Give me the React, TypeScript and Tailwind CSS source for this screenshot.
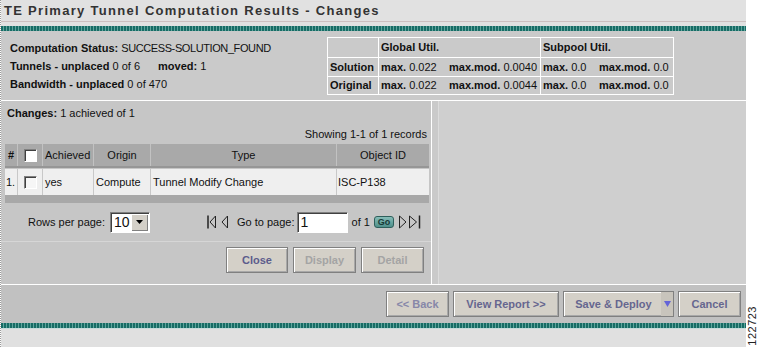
import React from "react";

const btnBase =
  "h-[26px] flex items-center justify-center bg-[#d4d0c8] border border-[#808080] shadow-[inset_1px_1px_0_#ffffff,inset_-1px_-1px_0_#a8a8a8] font-bold text-[11px]";

const Checkbox = ({ bg = "bg-white" }: { bg?: string }) => (
  <div className={`w-[13px] h-[13px] ${bg} border-t border-l border-[#808080] border-b border-r border-b-white border-r-white shadow-[inset_1px_1px_0_#404040]`} />
);

const Teal = () => (
  <div className="h-[5px] bg-[repeating-linear-gradient(90deg,#176c65_0px,#176c65_2px,#5fa39c_2px,#5fa39c_3px)]" />
);

// pager arrows
const First = () => (
  <svg width="9" height="14" viewBox="0 0 9 14">
    <line x1="1" y1="0.5" x2="1" y2="13.5" stroke="#222" strokeWidth="1.5" />
    <polygon points="8.5,1 3,7 8.5,13" fill="none" stroke="#222" strokeWidth="1" />
  </svg>
);
const Prev = () => (
  <svg width="7" height="14" viewBox="0 0 7 14">
    <polygon points="6.5,1 1,7 6.5,13" fill="none" stroke="#222" strokeWidth="1" />
  </svg>
);
const Next = () => (
  <svg width="8" height="14" viewBox="0 0 8 14">
    <polygon points="0.5,1 7,7 0.5,13" fill="none" stroke="#222" strokeWidth="1" />
  </svg>
);
const Last = () => (
  <svg width="12" height="14" viewBox="0 0 12 14">
    <polygon points="0.5,1 7.5,7 0.5,13" fill="none" stroke="#222" strokeWidth="1" />
    <line x1="10.5" y1="0.5" x2="10.5" y2="13.5" stroke="#222" strokeWidth="1.5" />
  </svg>
);

export default function App() {
  return (
    <div className="w-[762px] h-[347px] flex bg-white overflow-hidden font-['Liberation_Sans',Arial,sans-serif] text-[11px] text-[#111]">
      <div className="w-[746px] flex flex-col border-l border-dotted border-[#9a9a9a]">
        {/* title */}
        <div className="h-[21px] bg-[#e1e1e1] pl-[3px] pt-[3px] text-[13px] leading-[15px] font-bold tracking-[1.3px] text-[#333]">
          TE Primary Tunnel Computation Results - Changes
        </div>
        <div className="h-px bg-[#cbbfbf]" />
        <div className="h-[4px] bg-[#e1e1e1]" />
        <Teal />

        {/* status */}
        <div className="h-[69px] bg-[#cacaca] flex">
          <div className="w-[326px] pl-[9px] pt-[8px] leading-[18px]">
            <div>
              <b>Computation Status:</b> <span className="tracking-[-0.4px]">SUCCESS-SOLUTION_FOUND</span>
            </div>
            <div>
              <b>Tunnels - unplaced</b> 0 of 6 <b className="ml-[15px]">moved:</b> 1
            </div>
            <div>
              <b>Bandwidth - unplaced</b> 0 of 470
            </div>
          </div>
          <table className="mt-[6px] self-start border-collapse border border-white">
            <tbody>
              <tr className="h-[20px]">
                <td className="w-[51px] border border-white" />
                <td className="w-[162px] border border-white px-[2px] font-bold">Global Util.</td>
                <td className="w-[133px] border border-white px-[2px] font-bold">Subpool Util.</td>
              </tr>
              <tr className="h-[19px]">
                <td className="border border-white px-[2px] font-bold">Solution</td>
                <td className="border border-white px-[2px] whitespace-nowrap">
                  <span className="inline-block w-[68px]"><b>max.</b> 0.022</span>
                  <b>max.mod.</b> 0.0040
                </td>
                <td className="border border-white px-[2px] whitespace-nowrap">
                  <span className="inline-block w-[56px]"><b>max.</b> 0.0</span>
                  <b>max.mod.</b> 0.0
                </td>
              </tr>
              <tr className="h-[18px]">
                <td className="border border-white px-[2px] font-bold">Original</td>
                <td className="border border-white px-[2px] whitespace-nowrap">
                  <span className="inline-block w-[68px]"><b>max.</b> 0.022</span>
                  <b>max.mod.</b> 0.0044
                </td>
                <td className="border border-white px-[2px] whitespace-nowrap">
                  <span className="inline-block w-[56px]"><b>max.</b> 0.0</span>
                  <b>max.mod.</b> 0.0
                </td>
              </tr>
            </tbody>
          </table>
        </div>
        <div className="h-px bg-white" />

        {/* changes */}
        <div className="h-[183px] flex">
          <div className="w-[430px] bg-[#c6c6c6] flex flex-col">
            <div className="h-[24px] flex items-center pl-[6px]">
              <span>
                <b>Changes:</b> 1 achieved of 1
              </span>
            </div>
            <div className="h-[19px] flex items-center justify-end pr-[4px]">Showing 1-1 of 1 records</div>

            <div className="ml-[4px] w-[424px]">
              <div className="h-[24px] flex bg-[#a9a9a9] border-b-2 border-[#969696] text-[#111]">
                <div className="w-[13px] flex items-center justify-center border-r border-[#c2c2c2] font-bold">#</div>
                <div className="w-[25px] flex items-center justify-center border-r border-[#c2c2c2]">
                  <Checkbox />
                </div>
                <div className="w-[51px] flex items-center pl-[2px] border-r border-[#c2c2c2]">Achieved</div>
                <div className="w-[57px] flex items-center justify-center border-r border-[#c2c2c2]">Origin</div>
                <div className="w-[186px] flex items-center justify-center border-r border-[#c2c2c2]">Type</div>
                <div className="flex-1 flex items-center justify-center">Object ID</div>
              </div>
              <div className="h-[26px] mt-[1px] flex bg-[#efefef]">
                <div className="w-[13px] flex items-center pl-[1px] border-r border-[#c8c8c8]">1.</div>
                <div className="w-[25px] flex items-center justify-center border-r border-[#c8c8c8]">
                  <Checkbox bg="bg-[#f6f6f6]" />
                </div>
                <div className="w-[51px] flex items-center pl-[2px] border-r border-[#c8c8c8]">yes</div>
                <div className="w-[57px] flex items-center pl-[2px] border-r border-[#c8c8c8]">Compute</div>
                <div className="w-[186px] flex items-center pl-[2px] border-r border-[#c8c8c8]">Tunnel Modify Change</div>
                <div className="flex-1 flex items-center pl-[1px]">ISC-P138</div>
              </div>
              <div className="h-[8px] bg-[#a8a8a8]" />
            </div>

            {/* pager */}
            <div className="h-[38px] flex items-center">
              <span className="ml-[27px] text-[#111]">Rows per page:</span>
              <div className="ml-[5px] w-[40px] h-[21px] flex items-center bg-white border-t border-l border-[#808080] border-b border-r border-b-white border-r-white shadow-[inset_1px_1px_0_#404040]">
                <span className="pl-[3px] text-[14px] leading-none flex-1">10</span>
                <div className="w-[17px] h-[17px] mr-[1px] flex items-center justify-center bg-[#d4d0c8] shadow-[inset_1px_1px_0_#ffffff,inset_-1px_-1px_0_#808080]">
                  <svg width="7" height="4" viewBox="0 0 7 4">
                    <polygon points="0,0 7,0 3.5,4" fill="#000" />
                  </svg>
                </div>
              </div>
              <div className="ml-[57px] flex items-center">
                <First />
                <span className="ml-[5px]">
                  <Prev />
                </span>
                <span className="ml-[9px]">Go to page:</span>
                <div className="ml-[2px] w-[51px] h-[21px] flex items-center bg-white border-t border-l border-[#808080] border-b border-r border-b-white border-r-white shadow-[inset_1px_1px_0_#404040] pl-[3px] text-[14px] leading-none">
                  1
                </div>
                <span className="ml-[4px]">of 1</span>
                <div className="ml-[4px] w-[20px] h-[12px] flex items-center justify-center rounded-[3px] bg-[linear-gradient(#86bcb7,#4f8f8a)] border border-[#2e5f5b] text-[9px] font-bold text-[#173a37] leading-none">
                  Go
                </div>
                <span className="ml-[5px]">
                  <Next />
                </span>
                <span className="ml-[2px]">
                  <Last />
                </span>
              </div>
            </div>
            <div className="h-px bg-[#d6d6d6]" />
            <div className="flex justify-end gap-[5px] pr-[7px] pt-[5px]">
              <div className={`${btnBase} w-[62px] text-[#5c5c8c]`}>Close</div>
              <div className={`${btnBase} w-[63px] text-[#a4a4a4]`}>Display</div>
              <div className={`${btnBase} w-[63px] text-[#a4a4a4]`}>Detail</div>
            </div>
          </div>
          <div className="w-px bg-white" />
          <div className="flex-1 bg-[#cfcfcf] shadow-[inset_6px_0_0_#cacaca,inset_7px_0_0_#dcdcdc]" />
        </div>
        <div className="h-px bg-white" />

        {/* bottom bar */}
        <div className="h-[38px] flex items-center justify-end gap-[4px] pr-[5px] bg-[#c1c1c1]">
          <div className={`${btnBase} w-[63px] text-[#8787a8]`}>&lt;&lt; Back</div>
          <div className={`${btnBase} w-[106px] text-[#66668f]`}>View Report &gt;&gt;</div>
          <div className={`${btnBase} w-[111px] text-[#66668f] border-[#3c3c3c] justify-start`}>
            <span className="flex-1 text-center pl-[2px]">Save &amp; Deploy</span>
            <span className="w-[12px] h-full flex items-center justify-center bg-[#c8c4bc]">
              <svg width="7" height="6" viewBox="0 0 7 6">
                <polygon points="0,0 7,0 3.5,6" fill="#6464d8" />
              </svg>
            </span>
          </div>
          <div className={`${btnBase} w-[63px] text-[#66668f]`}>Cancel</div>
        </div>
        <Teal />
        <div className="h-px bg-[#c6dcda]" />
        <div className="flex-1 bg-[#e0e0e0]" />
      </div>

      {/* figure number */}
      <div className="flex-1 flex flex-col justify-end items-start pl-[1px] pb-[1px]">
        <span className="[writing-mode:vertical-rl] rotate-180 text-[11px] leading-none text-[#222] tracking-[0.5px]">
          122723
        </span>
      </div>
    </div>
  );
}
